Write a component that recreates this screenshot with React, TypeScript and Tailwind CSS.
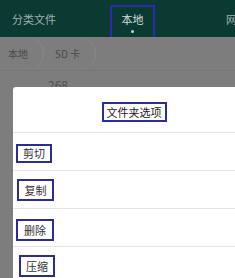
const font = { fontFamily: '"Noto Sans CJK SC", "Noto Sans", sans-serif' };

const items = [
  { label: "剪切", box: "ml-[3px] mt-[11px] h-[19px] w-[36px]" },
  { label: "复制", box: "ml-[4px] mt-[8px] h-[22px] w-[37px]" },
  { label: "删除", box: "ml-[3px] mt-[10px] h-[22px] w-[38px]" },
  { label: "压缩", box: "ml-[6px] mt-[8px] h-[22px] w-[36px]" },
];

export default function App() {
  return (
    <div
      className="relative h-[278px] w-[235px] overflow-hidden bg-[#7d7d7d]"
      style={font}
    >
      {/* top tabs */}
      <div className="flex h-[37px] items-start overflow-hidden whitespace-nowrap bg-[#0b3a33]">
        <span className="ml-[12px] mt-[11px] shrink-0 text-[11px] leading-[16px] text-[#9fb3ae]">
          分类文件
        </span>
        <div className="ml-[54px] mt-[5px] flex h-[34px] w-[45px] shrink-0 flex-col items-center border-2 border-[#2b2bb0]">
          <span className="mt-[4px] text-[11px] leading-[16px] text-[#d6dedc]">本地</span>
          <span className="mt-[3px] h-[3px] w-[3px] rounded-full bg-[#c8d2cf]" />
        </div>
        <span className="ml-[71px] mt-[11px] shrink-0 text-[11px] leading-[16px] text-[#9fb3ae]">
          网络
        </span>
      </div>

      {/* breadcrumb */}
      <div className="flex h-[34px] items-stretch whitespace-nowrap border-b border-[#767676] text-[10px] text-[#4a4a4a]">
        <div className="flex w-[44px] items-center rounded-r-[18px] border-r border-[#8a8a8a] pl-[8px]">
          本地
        </div>
        <div className="flex w-[52px] items-center rounded-r-[18px] border-r border-[#8a8a8a] pl-[11px]">
          SD 卡
        </div>
      </div>

      <div className="ml-[48px] mt-[7px] text-[12px] leading-[14px] text-[#4f4f4f]">268</div>

      {/* folder options dialog */}
      <div className="absolute left-[13px] top-[87px] h-[220px] w-[242px] rounded-tl-[3px] bg-white">
        <div className="flex h-[46px] justify-center border-b border-[#e6e6e6] pt-[15px]">
          <div className="flex h-[20px] w-[65px] items-center justify-center border-2 border-[#2b2b9a] text-[11px] text-[#222]">
            文件夹选项
          </div>
        </div>
        {items.map((it) => (
          <div key={it.label} className="flex h-[38px] items-start border-b border-[#e6e6e6]">
            <div
              className={`${it.box} flex items-center justify-center border-2 border-[#2b2b9a] text-[11px] text-[#333]`}
            >
              {it.label}
            </div>
          </div>
        ))}
      </div>
    </div>
  );
}
